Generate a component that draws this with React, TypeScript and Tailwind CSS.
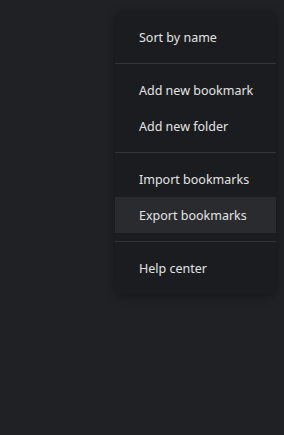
const groups = [
  ["Sort by name"],
  ["Add new bookmark", "Add new folder"],
  ["Import bookmarks", "Export bookmarks"],
  ["Help center"],
];

export default function App() {
  return (
    <div className="w-[284px] h-[435px] bg-[#202124] pt-[11px] pl-[115px] font-['Noto_Sans',sans-serif]">
      <div className="w-[161px] py-2 rounded-md bg-[#1b1c1f] shadow-[0_2px_8px_rgba(0,0,0,0.35)]">
        {groups.map((items, i) => (
          <div key={i}>
            {i > 0 && <div className="h-px bg-[#34353a] my-2" />}
            {items.map((label) => (
              <div
                key={label}
                className={
                  label === "Export bookmarks"
                    ? "h-9 flex items-center pl-6 pt-0.5 text-[12.5px] text-[#e3e3e3] bg-[#2a2b2f]"
                    : "h-9 flex items-center pl-6 pt-0.5 text-[12.5px] text-[#e3e3e3]"
                }
              >
                {label}
              </div>
            ))}
          </div>
        ))}
      </div>
    </div>
  );
}
